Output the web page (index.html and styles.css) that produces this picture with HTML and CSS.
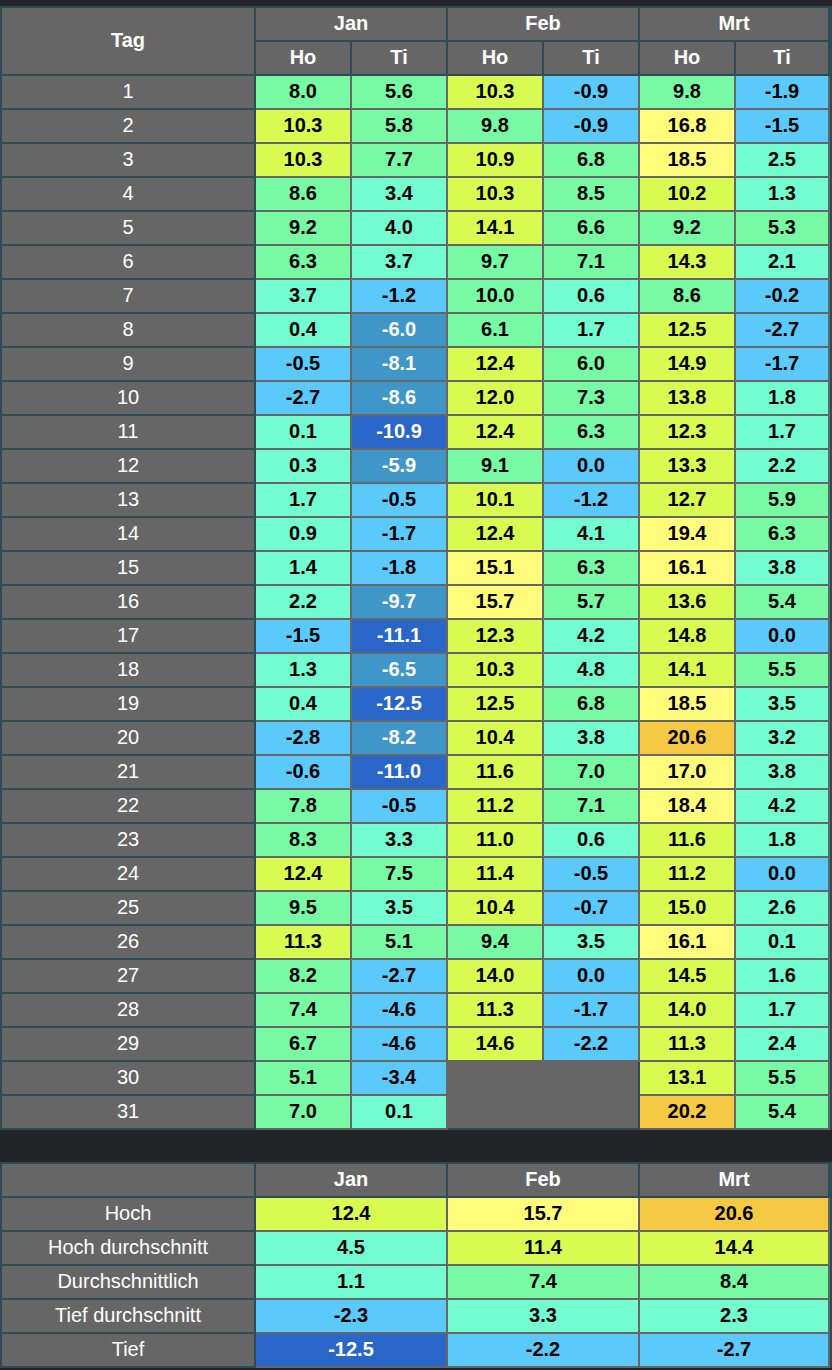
FILE: index.html
```html
<!DOCTYPE html>
<html lang="de">
<head>
<meta charset="utf-8">
<title>Temperaturen</title>
<link rel="stylesheet" href="styles.css">
</head>
<body>
<div class="page">
<table class="grid">
<colgroup><col class="c-tag"><col class="c-d"><col class="c-d"><col class="c-d"><col class="c-d"><col class="c-d"><col class="c-last"></colgroup>
<thead>
<tr><th rowspan="2" class="h">Tag</th><th colspan="2" class="h">Jan</th><th colspan="2" class="h">Feb</th><th colspan="2" class="h">Mrt</th></tr>
<tr><th class="h">Ho</th><th class="h">Ti</th><th class="h">Ho</th><th class="h">Ti</th><th class="h">Ho</th><th class="h">Ti</th></tr>
</thead>
<tbody>
<tr><th class="d">1</th><td class="gr">8.0</td><td class="gr">5.6</td><td class="yg">10.3</td><td class="sk">-0.9</td><td class="gr">9.8</td><td class="sk">-1.9</td></tr>
<tr><th class="d">2</th><td class="yg">10.3</td><td class="gr">5.8</td><td class="gr">9.8</td><td class="sk">-0.9</td><td class="ye">16.8</td><td class="sk">-1.5</td></tr>
<tr><th class="d">3</th><td class="yg">10.3</td><td class="gr">7.7</td><td class="yg">10.9</td><td class="gr">6.8</td><td class="ye">18.5</td><td class="cy">2.5</td></tr>
<tr><th class="d">4</th><td class="gr">8.6</td><td class="cy">3.4</td><td class="yg">10.3</td><td class="gr">8.5</td><td class="yg">10.2</td><td class="cy">1.3</td></tr>
<tr><th class="d">5</th><td class="gr">9.2</td><td class="cy">4.0</td><td class="yg">14.1</td><td class="gr">6.6</td><td class="gr">9.2</td><td class="gr">5.3</td></tr>
<tr><th class="d">6</th><td class="gr">6.3</td><td class="cy">3.7</td><td class="gr">9.7</td><td class="gr">7.1</td><td class="yg">14.3</td><td class="cy">2.1</td></tr>
<tr><th class="d">7</th><td class="cy">3.7</td><td class="sk">-1.2</td><td class="gr">10.0</td><td class="cy">0.6</td><td class="gr">8.6</td><td class="sk">-0.2</td></tr>
<tr><th class="d">8</th><td class="cy">0.4</td><td class="md">-6.0</td><td class="gr">6.1</td><td class="cy">1.7</td><td class="yg">12.5</td><td class="sk">-2.7</td></tr>
<tr><th class="d">9</th><td class="sk">-0.5</td><td class="md">-8.1</td><td class="yg">12.4</td><td class="gr">6.0</td><td class="yg">14.9</td><td class="sk">-1.7</td></tr>
<tr><th class="d">10</th><td class="sk">-2.7</td><td class="md">-8.6</td><td class="yg">12.0</td><td class="gr">7.3</td><td class="yg">13.8</td><td class="cy">1.8</td></tr>
<tr><th class="d">11</th><td class="cy">0.1</td><td class="dk">-10.9</td><td class="yg">12.4</td><td class="gr">6.3</td><td class="yg">12.3</td><td class="cy">1.7</td></tr>
<tr><th class="d">12</th><td class="cy">0.3</td><td class="md">-5.9</td><td class="gr">9.1</td><td class="sk">0.0</td><td class="yg">13.3</td><td class="cy">2.2</td></tr>
<tr><th class="d">13</th><td class="cy">1.7</td><td class="sk">-0.5</td><td class="yg">10.1</td><td class="sk">-1.2</td><td class="yg">12.7</td><td class="gr">5.9</td></tr>
<tr><th class="d">14</th><td class="cy">0.9</td><td class="sk">-1.7</td><td class="yg">12.4</td><td class="cy">4.1</td><td class="ye">19.4</td><td class="gr">6.3</td></tr>
<tr><th class="d">15</th><td class="cy">1.4</td><td class="sk">-1.8</td><td class="ye">15.1</td><td class="gr">6.3</td><td class="ye">16.1</td><td class="cy">3.8</td></tr>
<tr><th class="d">16</th><td class="cy">2.2</td><td class="md">-9.7</td><td class="ye">15.7</td><td class="gr">5.7</td><td class="yg">13.6</td><td class="gr">5.4</td></tr>
<tr><th class="d">17</th><td class="sk">-1.5</td><td class="dk">-11.1</td><td class="yg">12.3</td><td class="cy">4.2</td><td class="yg">14.8</td><td class="sk">0.0</td></tr>
<tr><th class="d">18</th><td class="cy">1.3</td><td class="md">-6.5</td><td class="yg">10.3</td><td class="cy">4.8</td><td class="yg">14.1</td><td class="gr">5.5</td></tr>
<tr><th class="d">19</th><td class="cy">0.4</td><td class="dk">-12.5</td><td class="yg">12.5</td><td class="gr">6.8</td><td class="ye">18.5</td><td class="cy">3.5</td></tr>
<tr><th class="d">20</th><td class="sk">-2.8</td><td class="md">-8.2</td><td class="yg">10.4</td><td class="cy">3.8</td><td class="or">20.6</td><td class="cy">3.2</td></tr>
<tr><th class="d">21</th><td class="sk">-0.6</td><td class="dk">-11.0</td><td class="yg">11.6</td><td class="gr">7.0</td><td class="ye">17.0</td><td class="cy">3.8</td></tr>
<tr><th class="d">22</th><td class="gr">7.8</td><td class="sk">-0.5</td><td class="yg">11.2</td><td class="gr">7.1</td><td class="ye">18.4</td><td class="cy">4.2</td></tr>
<tr><th class="d">23</th><td class="gr">8.3</td><td class="cy">3.3</td><td class="yg">11.0</td><td class="cy">0.6</td><td class="yg">11.6</td><td class="cy">1.8</td></tr>
<tr><th class="d">24</th><td class="yg">12.4</td><td class="gr">7.5</td><td class="yg">11.4</td><td class="sk">-0.5</td><td class="yg">11.2</td><td class="sk">0.0</td></tr>
<tr><th class="d">25</th><td class="gr">9.5</td><td class="cy">3.5</td><td class="yg">10.4</td><td class="sk">-0.7</td><td class="yg">15.0</td><td class="cy">2.6</td></tr>
<tr><th class="d">26</th><td class="yg">11.3</td><td class="gr">5.1</td><td class="gr">9.4</td><td class="cy">3.5</td><td class="ye">16.1</td><td class="cy">0.1</td></tr>
<tr><th class="d">27</th><td class="gr">8.2</td><td class="sk">-2.7</td><td class="yg">14.0</td><td class="sk">0.0</td><td class="yg">14.5</td><td class="cy">1.6</td></tr>
<tr><th class="d">28</th><td class="gr">7.4</td><td class="sk">-4.6</td><td class="yg">11.3</td><td class="sk">-1.7</td><td class="yg">14.0</td><td class="cy">1.7</td></tr>
<tr><th class="d">29</th><td class="gr">6.7</td><td class="sk">-4.6</td><td class="yg">14.6</td><td class="sk">-2.2</td><td class="yg">11.3</td><td class="cy">2.4</td></tr>
<tr><th class="d">30</th><td class="gr">5.1</td><td class="sk">-3.4</td><td class="empty" colspan="2" rowspan="2"></td><td class="yg">13.1</td><td class="gr">5.5</td></tr>
<tr><th class="d">31</th><td class="gr">7.0</td><td class="cy">0.1</td><td class="or">20.2</td><td class="gr">5.4</td></tr>
</tbody>
</table>

<table class="grid summary">
<colgroup><col class="c-tag"><col class="c-m"><col class="c-m"><col class="c-mlast"></colgroup>
<thead>
<tr><th class="h"></th><th class="h">Jan</th><th class="h">Feb</th><th class="h">Mrt</th></tr>
</thead>
<tbody>
<tr><th class="d">Hoch</th><td class="yg">12.4</td><td class="ye">15.7</td><td class="or">20.6</td></tr>
<tr><th class="d">Hoch durchschnitt</th><td class="cy">4.5</td><td class="yg">11.4</td><td class="yg">14.4</td></tr>
<tr><th class="d">Durchschnittlich</th><td class="cy">1.1</td><td class="gr">7.4</td><td class="gr">8.4</td></tr>
<tr><th class="d">Tief durchschnitt</th><td class="sk">-2.3</td><td class="cy">3.3</td><td class="cy">2.3</td></tr>
<tr><th class="d">Tief</th><td class="dk">-12.5</td><td class="sk">-2.2</td><td class="sk">-2.7</td></tr>
</tbody>
</table>
</div>
</body>
</html>
```

FILE: styles.css
```css
html, body {
  margin: 0;
  padding: 0;
  background: #232428;
}

.page {
  padding-top: 6px;
  width: 832px;
  font-family: "Liberation Sans", Arial, Helvetica, sans-serif;
  font-size: 20px;
}

.grid {
  box-sizing: border-box;
  width: 832px;
  table-layout: fixed;
  border-collapse: separate;
  border-spacing: 0;
  border-top: 2px solid #2d4b54;
  border-left: 2px solid #2d4b54;
  border-right: 2px solid #2d4b54;
}

.summary {
  margin-top: 32px;
}

.c-tag { width: 254px; }
.c-d { width: 96px; }
.c-last { width: 94px; }
.c-m { width: 192px; }
.c-mlast { width: 190px; }

.grid th,
.grid td {
  box-sizing: border-box;
  height: 34px;
  padding: 0 0 2px 0;
  text-align: center;
  vertical-align: middle;
  line-height: 22px;
}

.grid th {
  background: #666666;
  color: #ffffff;
  border-right: 2px solid #2d4b54;
  border-bottom: 2px solid #2d4b54;
}

.grid th.h {
  font-weight: bold;
}

.grid th.d {
  font-weight: normal;
}

.grid td {
  font-weight: bold;
  color: #000000;
  border-right: 2px solid #666666;
  border-bottom: 2px solid #666666;
}

.grid td.empty {
  background: #666666;
  border-right-color: #2d4b54;
  border-bottom-color: #2d4b54;
}

.dk { background: #2a65c8; }
.md { background: #4196c8; }
.sk { background: #5bcafa; }
.cy { background: #72fcd0; }
.gr { background: #78f9a3; }
.yg { background: #d9fb51; }
.ye { background: #fefc7a; }
.or { background: #f6c945; }

.grid td.dk,
.grid td.md {
  color: #ffffff;
}
```
